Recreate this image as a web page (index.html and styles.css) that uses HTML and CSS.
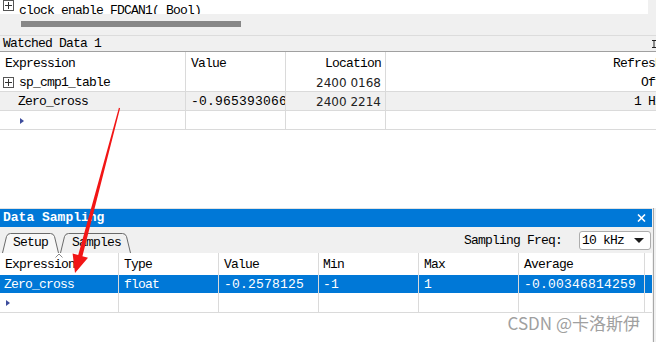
FILE: index.html
```html
<!DOCTYPE html>
<html>
<head>
  <title>Watched Data / Data Sampling</title>
  <meta charset="utf-8">
  <link rel="stylesheet" href="styles.css">
</head>
<body>
  <div class="screen">
    <div class="top-row">
      <div class="editor">
        <span class="plus-box"></span>
        <span class="code">clock enable FDCAN1( Bool)</span>
      </div>
    </div>
    <div class="hscroll"><div class="thumb"></div></div>

    <div class="panel-title">
      <span>Watched Data 1</span>
      <svg class="pin" width="4" height="8" viewBox="0 0 4 8"><path d="M0 0.5H4M2 0.5V7.5M0 7.5H4" stroke="#222" stroke-width="1" fill="none"/></svg>
    </div>

    <div class="watch-table">
      <div class="w-row head">
        <div class="w-cell c1">Expression</div>
        <div class="w-cell c2">Value</div>
        <div class="w-cell c3 right">Location</div>
        <div class="w-cell c4 right">Refresh</div>
      </div>
      <div class="w-row">
        <div class="w-cell c1 tight"><span class="plus-box"></span><span class="indent-text">sp_cmp1_table</span></div>
        <div class="w-cell c2"></div>
        <div class="w-cell c3 right addr">2400 0168</div>
        <div class="w-cell c4 right">Off</div>
      </div>
      <div class="w-row alt">
        <div class="w-cell c1 indent">Zero_cross</div>
        <div class="w-cell c2 num">-0.965393066</div>
        <div class="w-cell c3 right addr">2400 2214</div>
        <div class="w-cell c4 right">1 Hz</div>
      </div>
      <div class="w-row">
        <div class="w-cell c1 indent"><span class="new-row"></span></div>
        <div class="w-cell c2"></div>
        <div class="w-cell c3"></div>
        <div class="w-cell c4"></div>
      </div>
    </div>

    <div class="gap"></div>

    <div class="sampling">
      <div class="sampling-main">
        <div class="title-bar">
          <span>Data Sampling</span>
          <svg class="close" width="9" height="8" viewBox="0 0 9 8"><path d="M1 0.5L8 7.5M8 0.5L1 7.5" stroke="#fff" stroke-width="1.6"/></svg>
        </div>
        <div class="toolbar">
          <div class="tabs">
            <div class="tab active">
              <svg class="tab-shape" width="57" height="20" viewBox="0 0 57 20"><path d="M0.5 20 L4.5 3.5 Q5.5 0.5 8.5 0.5 L48.5 0.5 Q51.5 0.5 52.5 3.5 L56.5 20" fill="#f8f8f8" stroke="#6a6a6a"/></svg>
              <span class="tab-label">Setup</span>
            </div>
            <div class="tab">
              <svg class="tab-shape" width="71" height="20" viewBox="0 0 71 20"><path d="M0.5 20 L4.5 3.5 Q5.5 0.5 8.5 0.5 L62.5 0.5 Q65.5 0.5 66.5 3.5 L70.5 20" fill="#f0f0f0" stroke="#6a6a6a"/></svg>
              <span class="tab-label">Samples</span>
            </div>
          </div>
          <span class="freq-label">Sampling Freq:</span>
          <div class="combo">
            <span>10 kHz</span>
            <span class="combo-arrow"></span>
          </div>
        </div>

        <div class="grid">
          <div class="g-row head">
            <div class="g-cell g1">Expression<svg class="sort" width="8" height="5" viewBox="0 0 8 5"><path d="M0.5 4.5L4 1L7.5 4.5" stroke="#8a8a8a" fill="none"/></svg></div>
            <div class="g-cell g2">Type</div>
            <div class="g-cell g3">Value</div>
            <div class="g-cell g4">Min</div>
            <div class="g-cell g5">Max</div>
            <div class="g-cell g6">Average</div>
            <div class="g-cell g7"></div>
          </div>
          <div class="g-row selected">
            <div class="g-cell g1 first">Zero_cross</div>
            <div class="g-cell g2">float</div>
            <div class="g-cell g3 num">-0.2578125</div>
            <div class="g-cell g4 num">-1</div>
            <div class="g-cell g5 num">1</div>
            <div class="g-cell g6 num">-0.00346814259</div>
            <div class="g-cell g7"></div>
          </div>
          <div class="g-row last">
            <div class="g-cell g1"><span class="new-row"></span></div>
            <div class="g-cell g2"></div>
            <div class="g-cell g3"></div>
            <div class="g-cell g4"></div>
            <div class="g-cell g5"></div>
            <div class="g-cell g6"></div>
            <div class="g-cell g7"></div>
          </div>
        </div>

        <div class="watermark">CSDN @卡洛斯伊</div>
      </div>
      <div class="side-strip"></div>
    </div>

    <!-- red annotation arrow drawn over the screenshot -->
    <svg class="arrow" width="656" height="342" viewBox="0 0 656 342">
      <polygon points="120.1,108.2 82.4,256.3 88,257.8 75,273 72.6,253.6 78.2,255.1 118.9,107.8" fill="#f21616"/>
    </svg>
  </div>
</body>
</html>
```

FILE: styles.css
```css
body {
  margin: 0;
  background: #fff;
  font-family: "Liberation Mono", monospace;
  font-size: 13px;
  letter-spacing: -0.8px;
  color: #000;
}
.screen {
  position: relative;
  width: 656px;
  height: 342px;
  overflow: hidden;
  background: #fff;
}

/* editor strip at the very top */
.top-row {
  height: 14px;
  background: #f0f0f0;
  overflow: hidden;
}
.editor {
  width: 648px;
  height: 14px;
  background: #fff;
  display: flex;
  overflow: hidden;
}
.editor .plus-box {
  margin: 0 5px 0 3px;
}
.code {
  line-height: 14px;
  padding-top: 4px;
  white-space: nowrap;
}
.plus-box {
  flex: none;
  width: 9px;
  height: 9px;
  border: 1px solid #555;
  background:
    linear-gradient(#333, #333) center / 7px 1px no-repeat,
    linear-gradient(#333, #333) center / 1px 7px no-repeat,
    #fff;
}
.hscroll {
  box-sizing: border-box;
  height: 22px;
  padding: 7px 0 0 21px;
  background: #f0f0f0;
  border-bottom: 1px solid #dcdcdc;
}
.thumb {
  width: 220px;
  height: 6px;
  background: #878787;
}

/* watched data */
.panel-title {
  box-sizing: border-box;
  height: 16px;
  line-height: 15px;
  padding-left: 3px;
  background: #f0f0f0;
  border-bottom: 1px solid #a0a0a0;
  display: flex;
  justify-content: space-between;
  align-items: center;
}
.watch-table {
  width: 664px;
}
.w-row {
  display: flex;
  box-sizing: border-box;
  height: 19px;
  border-bottom: 1px solid #dadada;
}
.w-row.head {
  height: 21px;
  border-bottom: none;
}
.w-row.alt {
  background: #f0f0f0;
}
.w-cell {
  box-sizing: border-box;
  display: flex;
  align-items: center;
  padding: 1px 4px 0 5px;
  border-right: 1px solid #dadada;
  white-space: nowrap;
  overflow: hidden;
}
.w-row.head .w-cell {
  padding-top: 2px;
}
.w-cell.right {
  justify-content: flex-end;
}
.c1 { width: 186px; }
.c2 { width: 100px; }
.c3 { width: 100px; }
.c4 { width: 278px; border-right: none; padding-right: 2px; }
.w-cell.tight {
  padding-left: 3px;
}
.indent-text {
  margin-left: 5px;
}
.w-cell.indent {
  padding-left: 18px;
}
.addr {
  font-family: "DejaVu Sans", sans-serif;
  font-size: 12px;
  letter-spacing: 0;
  color: #222;
}
.num {
  letter-spacing: 0.2px;
}
.new-row {
  display: inline-block;
  width: 0;
  height: 0;
  margin-left: 2px;
  border-left: 4px solid #3d4c9c;
  border-top: 3px solid transparent;
  border-bottom: 3px solid transparent;
}
.gap {
  height: 78px;
}

/* data sampling panel */
.sampling {
  display: flex;
  height: 134px;
}
.sampling-main {
  width: 652px;
  border-top: 1px solid #e2e2e2;
}
.side-strip {
  flex: 1;
  background: linear-gradient(to right, #f0f0f0 1px, #a8a8a8 1px, #a8a8a8 2px, #f0f0f0 2px);
}
.title-bar {
  height: 18px;
  line-height: 18px;
  padding-left: 3px;
  background: #0078d7;
  color: #fff;
  font-weight: bold;
  letter-spacing: 0;
  display: flex;
  justify-content: space-between;
  align-items: center;
}
.close {
  margin-right: 6px;
}
.toolbar {
  height: 26px;
  background: #f0f0f0;
  display: flex;
  align-items: center;
}
.tabs {
  align-self: flex-end;
  display: flex;
  padding-left: 2px;
}
.tab {
  position: relative;
  height: 20px;
}
.tab + .tab {
  margin-left: 1px;
}
.tab-shape {
  position: absolute;
  left: 0;
  top: 0;
}
.tab-label {
  position: relative;
  display: block;
  line-height: 20px;
}
.tab.active {
  width: 57px;
}
.tab.active .tab-label {
  padding-left: 11px;
}
.tab:not(.active) {
  width: 71px;
}
.tab:not(.active) .tab-label {
  padding-left: 12px;
}
.freq-label {
  margin-left: auto;
}
.combo {
  box-sizing: border-box;
  width: 72px;
  height: 19px;
  margin: 0 1px 0 17px;
  padding-left: 2px;
  background: #fff;
  border: 1px solid #adadad;
  border-radius: 3px;
  display: flex;
  align-items: center;
  justify-content: space-between;
}
.combo-arrow {
  width: 0;
  height: 0;
  margin-right: 6px;
  border-top: 5px solid #1a1a1a;
  border-left: 5px solid transparent;
  border-right: 5px solid transparent;
}
.grid {
  background: #fff;
}
.g-row {
  display: flex;
  height: 18px;
}
.g-row.head {
  height: 22px;
}
.g-row.last {
  box-sizing: border-box;
  height: 20px;
  border-bottom: 1px solid #dadada;
}
.g-row.selected {
  background: #0078d7;
  color: #fff;
}
.g-cell {
  box-sizing: border-box;
  position: relative;
  display: flex;
  align-items: center;
  padding: 1px 0 0 5px;
  border-right: 1px solid #dadada;
  white-space: nowrap;
  overflow: hidden;
}
.g-cell.first {
  padding-left: 4px;
}
.g1 { width: 119px; }
.g2 { width: 100px; }
.g3 { width: 100px; }
.g4 { width: 100px; padding-left: 4px; }
.g5 { width: 100px; }
.g6 { width: 126px; }
.g7 { flex: 1; border-right: none; }
.sort {
  position: absolute;
  left: 55px;
  top: 0;
}
.g1 .new-row {
  margin-left: 1px;
}
.watermark {
  margin-top: 1px;
  padding-right: 12px;
  text-align: right;
  font-family: "Noto Sans CJK SC", sans-serif;
  font-size: 17px;
  line-height: 18px;
  letter-spacing: 0;
  color: #a0a0a0;
}
.arrow {
  position: absolute;
  left: 0;
  top: 0;
  pointer-events: none;
}
```
